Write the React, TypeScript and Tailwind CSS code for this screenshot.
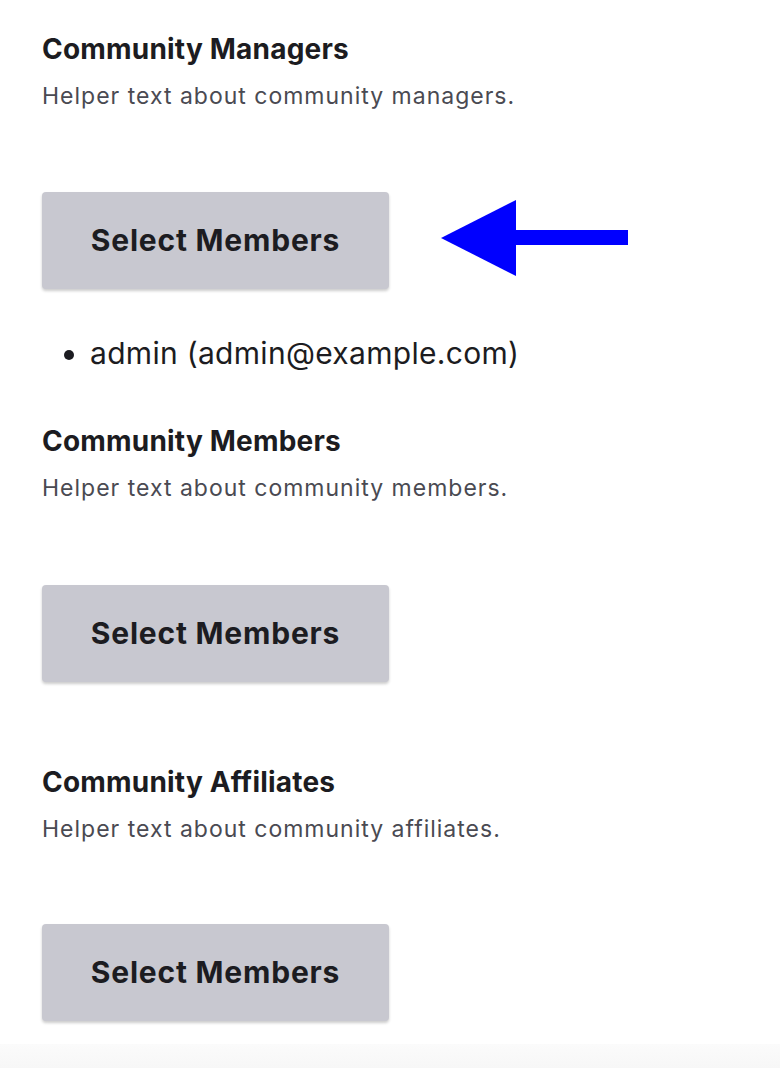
function Section({ title, helper, children }: { title: string; helper: string; children?: React.ReactNode }) {
  return (
    <section className="flex flex-col">
      <h2 className="text-[28px] leading-[36px] font-bold tracking-[0.2px] text-[#1c1c21]">{title}</h2>
      <p className="mt-[14px] text-[23px] leading-[30px] tracking-[1px] text-[#4a4a52]">{helper}</p>
      {children}
    </section>
  );
}

function SelectButton() {
  return (
    <button className="w-[347px] h-[97px] rounded-[4px] bg-[#c8c8d0] text-[30px] font-bold tracking-[0.8px] text-[#1c1c21] shadow-[0_2px_3px_rgba(0,0,0,0.2)]">
      Select Members
    </button>
  );
}

// blue pointer arrow next to the first button
function Arrow() {
  return (
    <svg width="190" height="76" viewBox="0 0 190 76" className="ml-[52px] mt-[8px]">
      <polygon points="0,38 75,0 75,76" fill="#0000ff" />
      <rect x="74" y="30" width="113" height="15" fill="#0000ff" />
    </svg>
  );
}

export default function App() {
  return (
    <div className="min-h-[1068px] bg-white flex flex-col" style={{ fontFamily: 'Inter, "Noto Sans", sans-serif' }}>
      <div className="px-[42px] pt-[31px] flex flex-col">
        <Section title="Community Managers" helper="Helper text about community managers.">
          <div className="mt-[81px] flex items-start">
            <SelectButton />
            <Arrow />
          </div>
          <ul className="mt-[46px] pl-[48px] list-disc text-[30px] leading-[36px] tracking-[0.3px] text-[#1c1c21]">
            <li>admin (admin@example.com)</li>
          </ul>
        </Section>
        <div className="mt-[52px]">
          <Section title="Community Members" helper="Helper text about community members.">
            <div className="mt-[82px]">
              <SelectButton />
            </div>
          </Section>
        </div>
        <div className="mt-[82px]">
          <Section title="Community Affiliates" helper="Helper text about community affiliates.">
            <div className="mt-[80px]">
              <SelectButton />
            </div>
          </Section>
        </div>
      </div>
      <div className="flex-1 mt-[23px] bg-gradient-to-b from-[#fbfbfb] to-[#f7f7f7]" />
    </div>
  );
}
